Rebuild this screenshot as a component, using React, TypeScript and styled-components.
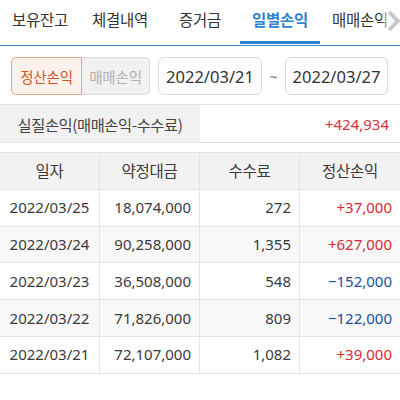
import React from "react";
import styled, { createGlobalStyle } from "styled-components";

const Global = createGlobalStyle`
  html, body { margin: 0; padding: 0; background: #fff; }
  body { font-family: "Noto Sans CJK KR", "Noto Sans", sans-serif; color: #333; }
  * { box-sizing: border-box; }
`;

const Page = styled.div`
  width: 400px;
  height: 400px;
  overflow: hidden;
  background: #fff;
`;

const TabBar = styled.div`
  position: relative;
  display: grid;
  grid-template-columns: repeat(5, 80px);
  height: 46px;
  border-bottom: 1.5px solid #3c8bd6;
`;

const Tab = styled.div<{ $active?: boolean }>`
  display: flex;
  align-items: center;
  justify-content: center;
  height: 44px;
  padding-bottom: 4px;
  font-size: 15.5px;
  letter-spacing: -0.2px;
  font-weight: ${(p) => (p.$active ? 700 : 400)};
  color: ${(p) => (p.$active ? "#2d83d2" : "#333")};
  border-bottom: ${(p) => (p.$active ? "3px solid #2d83d2" : "3px solid transparent")};
`;

const Chevron = styled.div`
  position: absolute;
  right: 0;
  top: 8px;
  width: 20px;
  height: 26px;
  display: flex;
  align-items: center;
  justify-content: flex-end;
  background: linear-gradient(to right, rgba(255,255,255,0), #fff 60%);
`;

const FilterRow = styled.div`
  display: flex;
  align-items: center;
  padding: 11px 0 0 11px;
`;

const Toggle = styled.div`
  display: flex;
  height: 38px;
`;

const Seg = styled.div<{ $on?: boolean }>`
  display: flex;
  align-items: center;
  justify-content: center;
  width: ${(p) => (p.$on ? "71px" : "68px")};
  font-size: 14.5px;
  letter-spacing: -0.2px;
  border: 1px solid ${(p) => (p.$on ? "#e0a98c" : "#dedede")};
  ${(p) => (p.$on ? "" : "border-left: none;")}
  border-radius: ${(p) => (p.$on ? "5px 0 0 5px" : "0 5px 5px 0")};
  background: ${(p) => (p.$on ? "#fdf1ec" : "#f1f1f1")};
  color: ${(p) => (p.$on ? "#d1582a" : "#b0b0b0")};
`;

const DateBox = styled.div<{ $w: number; $ml?: number }>`
  display: flex;
  align-items: center;
  justify-content: center;
  width: ${(p) => p.$w}px;
  margin-left: ${(p) => p.$ml || 0}px;
  height: 38px;
  border: 1px solid #d9d9d9;
  border-radius: 6px;
  font-size: 16.5px;
  color: #333;
  font-family: "Noto Sans", sans-serif;
`;

const Tilde = styled.div`
  width: 23px;
  text-align: center;
  color: #777;
  font-size: 14px;
  font-family: "Noto Sans", sans-serif;
`;

const Summary = styled.div`
  display: grid;
  grid-template-columns: 200px 200px;
  height: 39px;
  margin-top: 9px;
  border-top: 1px solid #e2e2e2;
  border-bottom: 1px solid #e2e2e2;
`;

const SumLabel = styled.div`
  display: flex;
  align-items: center;
  justify-content: center;
  background: #f1f1f1;
  font-size: 15.3px;
  letter-spacing: -0.4px;
  color: #444;
`;

const SumValue = styled.div`
  display: flex;
  align-items: center;
  justify-content: flex-end;
  padding-right: 11px;
  font-size: 15px;
  color: #d3333a;
  font-family: "Noto Sans", sans-serif;
`;

const Table = styled.div`
  margin-top: 9px;
  border-top: 1px solid #e2e2e2;
`;

const Row = styled.div<{ $bg?: string }>`
  display: grid;
  grid-template-columns: 100px 100px 100px 100px;
  height: 36.8px;
  border-bottom: 1px solid #e4e4e4;
  background: ${(p) => p.$bg || "#fff"};
`;

const Cell = styled.div<{ $align?: string; $color?: string; $head?: boolean }>`
  display: flex;
  align-items: center;
  justify-content: ${(p) => p.$align || "flex-end"};
  padding: 0 8px 1px 0;
  ${(p) => (p.$align === "center" ? "padding-right: 0;" : "")}
  border-right: 1px solid #e4e4e4;
  &:last-child { border-right: none; }
  font-size: ${(p) => (p.$head ? "15.5px" : "15px")};
  color: ${(p) => p.$color || "#3a3a3a"};
  font-family: ${(p) => (p.$head ? `"Noto Sans CJK KR", sans-serif` : `"Noto Sans", sans-serif`)};
  letter-spacing: ${(p) => (p.$head ? "-0.2px" : "0")};
`;

const RED = "#d42a32";
const BLUE = "#1d4f9a";

const rows = [
  ["2022/03/25", "18,074,000", "272", "+37,000"],
  ["2022/03/24", "90,258,000", "1,355", "+627,000"],
  ["2022/03/23", "36,508,000", "548", "\u2212152,000"],
  ["2022/03/22", "71,826,000", "809", "\u2212122,000"],
  ["2022/03/21", "72,107,000", "1,082", "+39,000"],
];

export default function App() {
  return (
    <Page>
      <Global />
      <TabBar>
        <Tab>보유잔고</Tab>
        <Tab>체결내역</Tab>
        <Tab>증거금</Tab>
        <Tab $active>일별손익</Tab>
        <Tab>매매손익</Tab>
        <Chevron>
          <svg width="12" height="20" viewBox="0 0 12 20">
            <path d="M1 1 L10 10 L1 19" fill="none" stroke="#c9c9c9" strokeWidth="4" strokeLinejoin="miter" />
          </svg>
        </Chevron>
      </TabBar>
      <FilterRow>
        <Toggle>
          <Seg $on>정산손익</Seg>
          <Seg>매매손익</Seg>
        </Toggle>
        <DateBox $w={104} $ml={8}>2022/03/21</DateBox>
        <Tilde>~</Tilde>
        <DateBox $w={103}>2022/03/27</DateBox>
      </FilterRow>
      <Summary>
        <SumLabel>실질손익(매매손익-수수료)</SumLabel>
        <SumValue>+424,934</SumValue>
      </Summary>
      <Table>
        <Row $bg="#f2f2f2">
          <Cell $head $align="center">일자</Cell>
          <Cell $head $align="center">약정대금</Cell>
          <Cell $head $align="center">수수료</Cell>
          <Cell $head $align="center">정산손익</Cell>
        </Row>
        {rows.map((r, i) => (
          <Row key={r[0]} $bg={i % 2 === 1 ? "#f8f8f8" : "#fff"}>
            <Cell $align="center">{r[0]}</Cell>
            <Cell>{r[1]}</Cell>
            <Cell>{r[2]}</Cell>
            <Cell $color={r[3].startsWith("+") ? RED : BLUE}>{r[3]}</Cell>
          </Row>
        ))}
      </Table>
    </Page>
  );
}
